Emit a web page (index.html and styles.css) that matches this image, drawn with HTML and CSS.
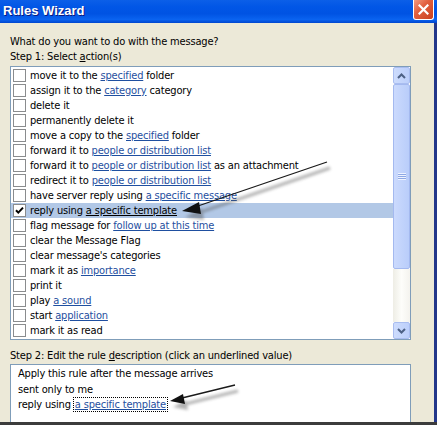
FILE: index.html
```html
<!DOCTYPE html>
<html>
<head>
<meta charset="utf-8">
<link rel="stylesheet" href="styles.css">
</head>
<body>
<div class="page">
  <div class="window">
    <div class="titlebar">
      <span class="title">Rules Wizard</span>
      <span class="close"><svg width="11" height="11" viewBox="0 0 11 11"><path d="M1.5 1.5 L9.5 9.5 M9.5 1.5 L1.5 9.5" stroke="#fff" stroke-width="2.2" stroke-linecap="square"/></svg></span>
    </div>
    <div class="body">
      <div class="line">What do you want to do with the message?</div>
      <div class="line">Step 1: Select <u>a</u>ction(s)</div>
      <div class="listbox">
        <div class="rows">
          <div class="row"><span class="cb"></span><span>move it to the <a>specified</a> folder</span></div>
          <div class="row"><span class="cb"></span><span>assign it to the <a>category</a> category</span></div>
          <div class="row"><span class="cb"></span><span>delete it</span></div>
          <div class="row"><span class="cb"></span><span>permanently delete it</span></div>
          <div class="row"><span class="cb"></span><span>move a copy to the <a>specified</a> folder</span></div>
          <div class="row"><span class="cb"></span><span>forward it to <a>people or distribution list</a></span></div>
          <div class="row"><span class="cb"></span><span>forward it to <a>people or distribution list</a> as an attachment</span></div>
          <div class="row"><span class="cb"></span><span>redirect it to <a>people or distribution list</a></span></div>
          <div class="row"><span class="cb"></span><span>have server reply using <a>a specific message</a></span></div>
          <div class="row selected"><span class="cb"><svg width="11" height="11" viewBox="0 0 11 11"><path d="M2 5.2 L4.3 7.6 L9 2.6" fill="none" stroke="#000" stroke-width="2"/></svg></span><span>reply using <a>a specific template</a></span></div>
          <div class="row"><span class="cb"></span><span>flag message for <a>follow up at this time</a></span></div>
          <div class="row"><span class="cb"></span><span>clear the Message Flag</span></div>
          <div class="row"><span class="cb"></span><span>clear message's categories</span></div>
          <div class="row"><span class="cb"></span><span>mark it as <a>importance</a></span></div>
          <div class="row"><span class="cb"></span><span>print it</span></div>
          <div class="row"><span class="cb"></span><span>play <a>a sound</a></span></div>
          <div class="row"><span class="cb"></span><span>start <a>application</a></span></div>
          <div class="row"><span class="cb"></span><span>mark it as read</span></div>
        </div>
        <div class="scrollbar">
          <div class="sbtn"><svg width="9" height="6" viewBox="0 0 9 6"><path d="M1 5 L4.5 1.5 L8 5" fill="none" stroke="#4d6185" stroke-width="2"/></svg></div>
          <div class="thumb"><span class="grip"></span></div>
          <div class="track"></div>
          <div class="sbtn"><svg width="9" height="6" viewBox="0 0 9 6"><path d="M1 1 L4.5 4.5 L8 1" fill="none" stroke="#4d6185" stroke-width="2"/></svg></div>
        </div>
      </div>
      <div class="line step2">Step 2: Edit the rule <u>d</u>escription (click an underlined value)</div>
      <div class="desc">
        <div class="dline">Apply this rule after the message arrives</div>
        <div class="dline">sent only to me</div>
        <div class="dline">reply using <a class="focus">a specific template</a></div>
      </div>
    </div>
  </div>
  <svg class="annot" width="441" height="426" viewBox="0 0 441 426">
    <defs>
      <filter id="blur" x="-20%" y="-50%" width="140%" height="200%"><feGaussianBlur stdDeviation="1.6"/></filter>
    </defs>
    <g filter="url(#blur)" opacity="0.45" transform="translate(3,6)">
      <path d="M327 162 L195 207" stroke="#555" stroke-width="3" fill="none"/>
      <path d="M182 211 L199 202 L201 214 Z" fill="#555"/>
      <path d="M235 385 L182 398" stroke="#555" stroke-width="3" fill="none"/>
      <path d="M170 401 L183 394 L185 404 Z" fill="#555"/>
    </g>
    <path d="M327 162 L195 207" stroke="#1a1a1a" stroke-width="1.3" fill="none"/>
    <path d="M182 211 L199 202 L201 214 Z" fill="#111"/>
    <path d="M235 385 L182 398" stroke="#1a1a1a" stroke-width="1.3" fill="none"/>
    <path d="M170 401 L183 394 L185 404 Z" fill="#111"/>
  </svg>
</div>
</body>
</html>
```

FILE: styles.css
```css
html, body {
  margin: 0;
  padding: 0;
  background: #fff;
}
.page {
  position: relative;
  width: 441px;
  height: 426px;
  overflow: hidden;
  background: #fff;
  font-family: "DejaVu Sans Condensed", "DejaVu Sans", sans-serif;
  font-size: 11px;
  letter-spacing: -0.17px;
  color: #000;
}
.window {
  width: 437px;
  height: 425px;
  display: flex;
  flex-direction: column;
  border-bottom: 3px solid #3c3c3c;
  box-sizing: border-box;
}
.titlebar {
  height: 23px;
  flex: none;
  display: flex;
  align-items: flex-start;
  justify-content: space-between;
  padding: 0 3px 0 3px;
  background: linear-gradient(to bottom, #0b5fe8 0%, #0156e6 30%, #0053e3 60%, #0a63f0 85%, #0046cf 100%);
  box-sizing: border-box;
}
.title {
  font-family: "Liberation Sans", Arial, sans-serif;
  font-weight: bold;
  font-size: 13px;
  letter-spacing: 0;
  line-height: 22px;
  color: #fff;
  text-shadow: 1px 1px 0 #0a1a80;
}
.close {
  width: 21px;
  height: 20px;
  box-sizing: border-box;
  border: 1px solid #fff;
  border-top: none;
  border-radius: 0 0 3px 3px;
  background: linear-gradient(135deg, #f29a80 0%, #e2603f 40%, #c8401f 100%);
  display: flex;
  align-items: center;
  justify-content: center;
}
.body {
  flex: 1;
  background: #ece9d8;
  border-right: 3px solid #23378a;
  padding: 11px 23px 0 10px;
  display: flex;
  flex-direction: column;
  overflow: hidden;
}
.line {
  line-height: 15px;
  height: 15px;
  white-space: nowrap;
}
.listbox {
  margin-top: 2px;
  height: 274px;
  flex: none;
  box-sizing: border-box;
  border: 1px solid #7f9db9;
  background: #fff;
  display: flex;
}
.rows {
  flex: 1;
  padding-top: 1px;
}
.row {
  height: 15px;
  display: flex;
  align-items: center;
  padding-left: 2px;
  gap: 4px;
  white-space: nowrap;
  line-height: 15px;
}
.row.selected {
  background: #b2c8e6;
}
.row.selected a {
  color: #000;
}
.cb {
  width: 13px;
  height: 13px;
  box-sizing: border-box;
  border: 1px solid #8a8c8e;
  background: #fff;
  flex: none;
  display: flex;
  align-items: center;
  justify-content: center;
}
a {
  color: #1f4fa0;
  text-decoration: underline;
}
.scrollbar {
  width: 17px;
  flex: none;
  display: flex;
  flex-direction: column;
}
.sbtn {
  height: 17px;
  box-sizing: border-box;
  border: 1px solid #a9bdf0;
  border-radius: 2px;
  background: linear-gradient(to right, #cddcfd, #bccffb);
  display: flex;
  align-items: center;
  justify-content: center;
}
.thumb {
  height: 185px;
  box-sizing: border-box;
  border: 1px solid #a4b9ef;
  border-radius: 2px;
  background: linear-gradient(to right, #cbdafd, #b9cdfa);
  display: flex;
  align-items: center;
  justify-content: center;
}
.grip {
  width: 8px;
  height: 7px;
  background: repeating-linear-gradient(to bottom, #eef3ff 0, #eef3ff 1px, #8ea8e4 1px, #8ea8e4 2px);
}
.track {
  flex: 1;
  background: linear-gradient(to right, #eeede5, #fdfdfa 50%, #f4f3ee);
}
.step2 {
  margin-top: 8px;
}
.desc {
  margin-top: 1px;
  flex: 1;
  border: 1px solid #7f9db9;
  border-bottom: none;
  background: #fff;
  padding: 1px 7px 0 7px;
}
.dline {
  line-height: 15.5px;
  height: 15.5px;
  white-space: nowrap;
}
.focus {
  outline: 1px dotted #000;
  outline-offset: 0;
  padding: 0 1px;
}
.annot {
  position: absolute;
  left: 0;
  top: 0;
  pointer-events: none;
}
```
